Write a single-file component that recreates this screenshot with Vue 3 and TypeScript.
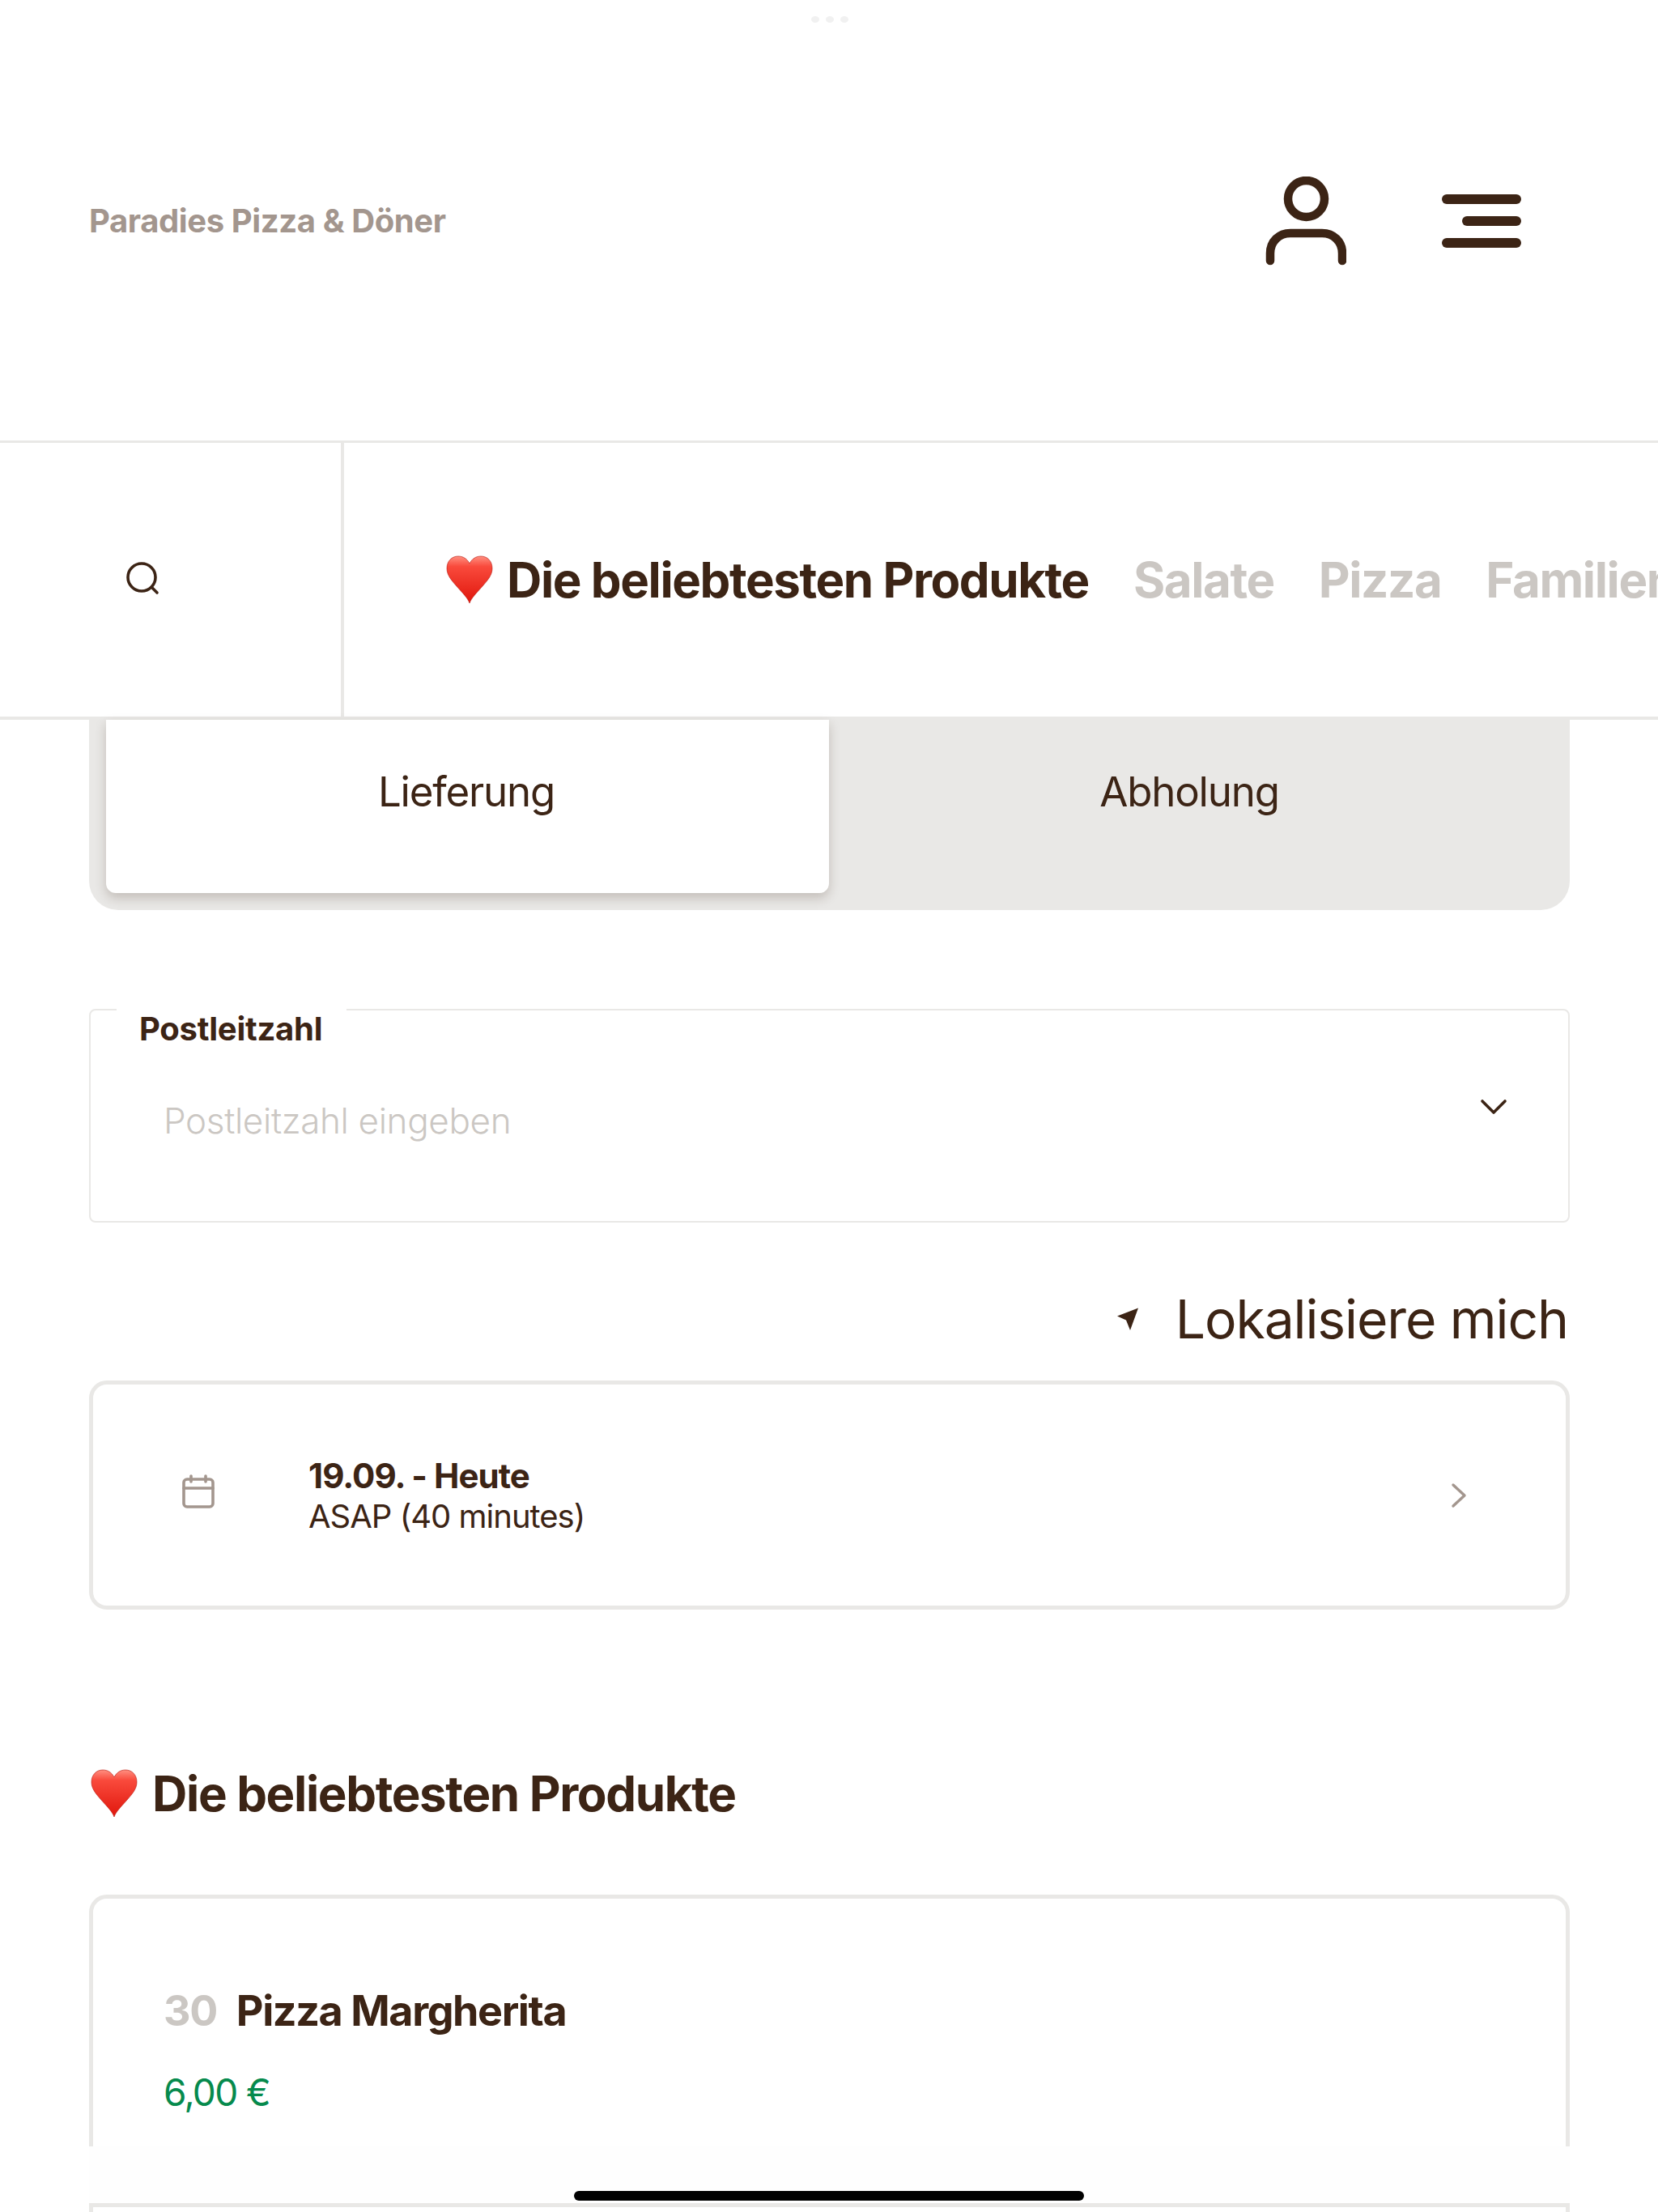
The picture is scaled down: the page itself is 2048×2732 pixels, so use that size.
<script setup lang="ts">
const tabs: string[] = ['Salate', 'Pizza', 'Familienpizza']
</script>

<template>
  <div class="page">
    <div class="dots"><i></i><i></i><i></i></div>
    <header class="top">
      <span class="brand">Paradies Pizza &amp; Döner</span>
      <svg class="user" width="100" height="110" viewBox="0 0 100 110" fill="none" stroke="#3c2415" stroke-width="10.5" stroke-linecap="round">
        <circle cx="50.5" cy="27.5" r="22.5" />
        <path d="M6 104V95C6 80 17 70 31 70H70C84 70 95 80 95 95V104" />
      </svg>
      <div class="menu"><i></i><i class="short"></i><i></i></div>
    </header>

    <nav class="tabbar">
      <div class="searchcell">
        <svg width="42" height="44" viewBox="0 0 42 44" fill="none" stroke="#3c2415" stroke-width="3.6" stroke-linecap="round">
          <circle cx="20" cy="21" r="17" />
          <path d="M32.5 33.5L39 40" />
        </svg>
      </div>
      <div class="tabs">
        <span class="tab active">
          <svg class="heart" width="58" height="60" viewBox="0 0 58 60"><use href="#heart-shape" /></svg>
          Die beliebtesten Produkte
        </span>
        <span v-for="t in tabs" :key="t" class="tab">{{ t }}</span>
      </div>
    </nav>

    <main class="content">
      <div class="segment">
        <div class="seg on">Lieferung</div>
        <div class="seg">Abholung</div>
      </div>

      <div class="field">
        <span class="legend">Postleitzahl</span>
        <span class="placeholder">Postleitzahl eingeben</span>
        <svg class="chev" width="34" height="22" viewBox="0 0 34 22" fill="none" stroke="#3c2415" stroke-width="3.6" stroke-linecap="round" stroke-linejoin="round">
          <path d="M3 4L17 18L31 4" />
        </svg>
      </div>

      <div class="locate">
        <svg width="28" height="30" viewBox="0 0 28 30" fill="#3c2415">
          <path d="M1 11.500L27 1.500L17 29L12 16.500Z" />
        </svg>
        <span>Lokalisiere mich</span>
      </div>

      <div class="slot">
        <svg class="cal" width="40" height="42" viewBox="0 0 40 42" fill="none" stroke="#a3968e" stroke-width="3.6" stroke-linecap="round" stroke-linejoin="round">
          <rect x="2" y="6" width="36" height="34" rx="4" />
          <path d="M2 17H38M11 2V9M29 2V9" />
        </svg>
        <div class="slottext">
          <strong>19.09. - Heute</strong>
          <span>ASAP (40 minutes)</span>
        </div>
        <svg class="next" width="20" height="32" viewBox="0 0 20 32" fill="none" stroke="#a3968e" stroke-width="3.4" stroke-linecap="round" stroke-linejoin="round">
          <path d="M3 3L17 16L3 29" />
        </svg>
      </div>

      <h2 class="section">
        <svg class="heart" width="58" height="60" viewBox="0 0 58 60"><use href="#heart-shape" /></svg>
        Die beliebtesten Produkte
      </h2>

      <article class="product">
        <div class="pname"><span class="num">30</span>Pizza Margherita</div>
        <div class="price">6,00 €</div>
      </article>
    </main>

    <div class="homebar"><i></i></div>

    <svg class="defs" width="0" height="0">
      <defs>
        <linearGradient id="heart-fill" x1="0" y1="0" x2="0" y2="1">
          <stop offset="0" stop-color="#ff8f80" />
          <stop offset="0.22" stop-color="#f94a3c" />
          <stop offset="1" stop-color="#e0160c" />
        </linearGradient>
        <path id="heart-shape" fill="url(#heart-fill)" stroke="#b5140c" stroke-width="0.6" d="M29 59C27 53 21 47 13 38C6 30 1 24 1 16C1 7 7 1 15 1C21 1 26 4 29 10C32 4 37 1 43 1C51 1 57 7 57 16C57 24 52 30 45 38C37 47 31 53 29 59Z" />
      </defs>
    </svg>
  </div>
</template>

<style scoped>
.page {
  position: relative;
  width: 2048px;
  height: 2732px;
  overflow: hidden;
  background: #fff;
  color: #3c2415;
  font-family: Inter, "Liberation Sans", sans-serif;
}
.dots {
  position: absolute;
  top: 20px;
  left: 1002px;
  display: flex;
  gap: 8px;
}
.dots i {
  width: 10px;
  height: 8px;
  border-radius: 50%;
  background: #f1f1f1;
}
.defs {
  position: absolute;
}
.top {
  box-sizing: border-box;
  padding: 0 169px 0 110px;
  display: flex;
  align-items: center;
  border-bottom: 3px solid #e9e8e6;
  height: 547px;
}
.brand {
  flex: 1;
  font-size: 40px;
  font-weight: 650;
  letter-spacing: -0.4px;
  color: #a3968e;
}
.user {
  margin-right: 118px;
  margin-top: 2px;
}
.menu {
  width: 98px;
  display: flex;
  flex-direction: column;
  align-items: flex-end;
  gap: 15px;
  margin-top: 1px;
}
.menu i {
  display: block;
  width: 98px;
  height: 12px;
  border-radius: 6px;
  background: #3c2415;
}
.menu i.short {
  width: 73px;
}
.tabbar {
  display: flex;
  height: 342px;
  box-sizing: border-box;
  border-bottom: 4px solid #e9e8e6;
}
.searchcell {
  width: 425px;
  box-sizing: border-box;
  border-right: 4px solid #e9e8e6;
  display: flex;
  align-items: center;
  justify-content: flex-start;
  padding: 0 0 4px 155px;
}
.tabs {
  flex: 1;
  min-width: 0;
  overflow: hidden;
  display: flex;
  align-items: center;
  gap: 55px;
  padding-left: 126px;
  font-size: 60px;
  font-weight: 650;
  white-space: nowrap;
  letter-spacing: -1.42px;
}
.tab {
  flex: none;
  color: #cbc7c3;
  display: flex;
  align-items: center;
}
.tab.active {
  color: #3c2415;
}
.heart {
  margin-right: 17px;
  flex: none;
}
.content {
  padding: 0 109px 0 110px;
}
.segment {
  height: 235px;
  box-sizing: border-box;
  padding: 0 22px 21px 21px;
  display: flex;
  background: #e9e8e6;
  border-radius: 0 0 36px 36px;
}
.seg {
  flex: 1;
  display: flex;
  align-items: center;
  justify-content: center;
  font-size: 51px;
  letter-spacing: -1.2px;
  padding: 0 3px 38px 0;
}
.seg.on {
  background: #fff;
  border-radius: 0 0 12px 12px;
  box-shadow: 0 6px 14px rgba(60, 36, 21, 0.22);
}
.field {
  position: relative;
  margin-top: 122px;
  height: 264px;
  box-sizing: border-box;
  border: 2px solid #e9e8e6;
  border-radius: 8px;
  display: flex;
  align-items: center;
  padding-left: 90px;
}
.legend {
  position: absolute;
  top: -2px;
  left: 32px;
  padding: 0 30px 0 28px;
  height: 50px;
  line-height: 50px;
  background: #fff;
  font-size: 40px;
  font-weight: 650;
  letter-spacing: -0.25px;
}
.placeholder {
  font-size: 44px;
  font-weight: 300;
  letter-spacing: -0.35px;
  color: #cbc7c3;
  margin-top: 12px;
}
.chev {
  position: absolute;
  right: 75px;
  top: 108px;
}
.locate {
  display: flex;
  justify-content: flex-end;
  align-items: center;
  gap: 45px;
  height: 196px;
  box-sizing: border-box;
  padding-top: 42px;
  font-size: 66px;
  padding-right: 2px;
}
.locate span {
  letter-spacing: -1.1px;
}
.slot {
  height: 283px;
  box-sizing: border-box;
  border: 5px solid #e9e8e6;
  border-radius: 22px;
  display: flex;
  align-items: center;
  padding: 0 122px 0 110px;
  margin-top: -1px;
}
.cal {
  flex: none;
  margin-top: -10px;
}
.slottext {
  flex: 1;
  margin: 2px 0 0 116px;
  display: flex;
  flex-direction: column;
  font-size: 40px;
  line-height: 50px;
  letter-spacing: -1px;
}
.slottext strong {
  font-size: 42px;
  font-weight: 650;
  letter-spacing: -0.95px;
}
.next {
  flex: none;
}
.section {
  margin: 0;
  height: 352px;
  display: flex;
  align-items: center;
  font-size: 60px;
  font-weight: 650;
  letter-spacing: -1.35px;
  padding: 102px 0 0 2px;
  box-sizing: border-box;
}
.section .heart {
  margin-right: 18px;
}
.product {
  height: 440px;
  box-sizing: border-box;
  border: 5px solid #e9e8e6;
  border-radius: 22px;
  padding: 107px 0 0 87px;
}
.pname {
  display: flex;
  align-items: baseline;
  font-size: 52px;
  font-weight: 650;
  letter-spacing: -1.4px;
  line-height: 64px;
}
.num {
  color: #cbc7c3;
  margin-right: 24px;
}
.price {
  margin-top: 39px;
  font-size: 46px;
  letter-spacing: -1.6px;
  color: #068a4d;
  line-height: 58px;
}
.homebar {
  position: absolute;
  left: 110px;
  width: 1829px;
  top: 2651px;
  height: 70px;
  background: #fefefe;
  border-bottom: 5px solid #e9e8e6;
  display: flex;
  justify-content: center;
}
.homebar i {
  position: absolute;
  left: 599px;
  top: 55px;
  width: 630px;
  height: 12px;
  border-radius: 6px;
  background: #000;
}
</style>
